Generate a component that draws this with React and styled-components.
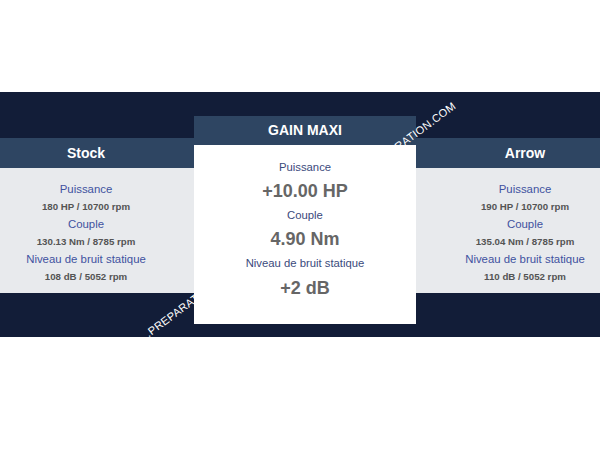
import styled, { createGlobalStyle } from "styled-components"

const GlobalStyle = createGlobalStyle`
  body {
    margin: 0;
    background: #fff;
    font-family: "Liberation Sans", Arial, sans-serif;
    overflow-x: hidden;
  }
`

const columns = [
  {
    name: "Stock",
    rows: [
      ["Puissance", "180 HP / 10700 rpm"],
      ["Couple", "130.13 Nm / 8785 rpm"],
      ["Niveau de bruit statique", "108 dB / 5052 rpm"],
    ],
  },
  {
    name: "Arrow",
    rows: [
      ["Puissance", "190 HP / 10700 rpm"],
      ["Couple", "135.04 Nm / 8785 rpm"],
      ["Niveau de bruit statique", "110 dB / 5052 rpm"],
    ],
  },
]

const gains = [
  ["Puissance", "+10.00 HP"],
  ["Couple", "4.90 Nm"],
  ["Niveau de bruit statique", "+2 dB"],
]

function App() {
  return (
    <>
      <GlobalStyle />
      <Band>
        <Row>
          <SideColumn data={columns[0]} />
          <Card>
            <CardTitle>GAIN MAXI</CardTitle>
            <CardBody>
              {gains.map(([label, value]) => (
                <div key={label}>
                  <GainLabel>{label}</GainLabel>
                  <GainValue>{value}</GainValue>
                </div>
              ))}
            </CardBody>
          </Card>
          <SideColumn data={columns[1]} />
        </Row>
        <Watermark $left={150} $top={236}>.PREPARATION.COM</Watermark>
        <Watermark $left={369} $top={72}>PREPARATION.COM</Watermark>
      </Band>
    </>
  )
}

const SideColumn = ({ data }) => (
  <Side>
    <SideTitle>{data.name}</SideTitle>
    <SideBody>
      {data.rows.map(([label, value]) => (
        <div key={label}>
          <Label>{label}</Label>
          <Value>{value}</Value>
        </div>
      ))}
    </SideBody>
  </Side>
)

const Band = styled.section`
  position: relative;
  overflow: hidden;
  margin-top: 92px;
  height: 245px;
  box-sizing: border-box;
  padding-top: 24px;
  background: #121d38;
`

const Row = styled.div`
  display: grid;
  grid-template-columns: 216px 222px 218px;
  align-items: start;
  margin-left: -22px;
  width: 656px;
`

const Side = styled.div`
  margin-top: 22px;
  text-align: center;
`

const SideTitle = styled.div`
  height: 30px;
  line-height: 30px;
  background: #2e4562;
  color: #fff;
  font-size: 14px;
  font-weight: bold;
`

const SideBody = styled.div`
  height: 125px;
  box-sizing: border-box;
  padding-top: 12.5px;
  background: #e8eaed;
`

const Label = styled.div`
  font-size: 11.4px;
  line-height: 17.6px;
  color: #3f52a0;
`

const Value = styled.div`
  font-size: 9.7px;
  line-height: 17.6px;
  font-weight: bold;
  color: #545454;
`

const Card = styled.div`
  text-align: center;
`

const CardTitle = styled.div`
  height: 29px;
  line-height: 28px;
  background: #2e4562;
  color: #fff;
  font-size: 14px;
  font-weight: bold;
`

const CardBody = styled.div`
  height: 179px;
  box-sizing: border-box;
  padding-top: 9.5px;
  background: #fff;
`

const GainLabel = styled.div`
  font-size: 11.3px;
  line-height: 24.2px;
  color: #3b4a7c;
`

const GainValue = styled.div`
  font-size: 18px;
  line-height: 24.2px;
  font-weight: bold;
  color: #666;
`

const Watermark = styled.span`
  position: absolute;
  left: ${(p) => p.$left}px;
  top: ${(p) => p.$top}px;
  font-size: 11px;
  line-height: 11px;
  letter-spacing: 0.3px;
  color: #fff;
  white-space: nowrap;
  transform-origin: 0 100%;
  transform: rotate(-36.5deg);
  pointer-events: none;
`

export default App
